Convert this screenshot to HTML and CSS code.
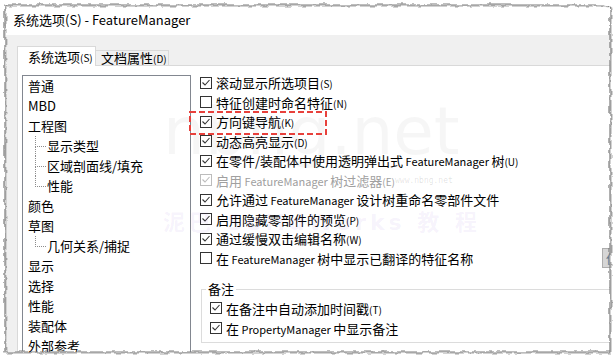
FILE: index.html
```html
<!DOCTYPE html>
<html lang="zh-CN">
<head>
  <meta charset="UTF-8">
  <meta name="viewport" content="width=device-width, initial-scale=1.0">
  <title>系统选项(S) - FeatureManager</title>
  <link rel="stylesheet" href="styles.css">
</head>
<body>
  <div class="dialog">
    <div class="titlebar">系统选项<span class="en">(S) - FeatureManager</span></div>

    <div class="client">
      <div class="tabs">
        <div class="tab active">系统选项<span class="key">(S)</span></div>
        <div class="tab">文档属性<span class="key">(D)</span></div>
      </div>

      <div class="page">
        <ul class="tree">
          <li>普通</li>
          <li><span class="en">MBD</span></li>
          <li>工程图</li>
          <li class="child">显示类型</li>
          <li class="child">区域剖面线/填充</li>
          <li class="child last">性能</li>
          <li>颜色</li>
          <li>草图</li>
          <li class="child last">几何关系/捕捉</li>
          <li>显示</li>
          <li>选择</li>
          <li>性能</li>
          <li>装配体</li>
          <li>外部参考</li>
        </ul>

        <div class="options">
          <div class="opt">
            <svg class="box" viewBox="0 0 12 12"><rect x=".5" y=".5" width="11" height="11"/><path d="M2.5 5.5L5 8l4.5-5"/></svg>
            <span>滚动显示所选项目<span class="key">(S)</span></span>
          </div>
          <div class="opt">
            <svg class="box" viewBox="0 0 12 12"><rect x=".5" y=".5" width="11" height="11"/></svg>
            <span>特征创建时命名特征<span class="key">(N)</span></span>
          </div>
          <div class="opt">
            <svg class="box" viewBox="0 0 12 12"><rect x=".5" y=".5" width="11" height="11"/><path d="M2.5 5.5L5 8l4.5-5"/></svg>
            <span>方向键导航<span class="key">(K)</span></span>
          </div>
          <div class="opt">
            <svg class="box" viewBox="0 0 12 12"><rect x=".5" y=".5" width="11" height="11"/><path d="M2.5 5.5L5 8l4.5-5"/></svg>
            <span>动态高亮显示<span class="key">(D)</span></span>
          </div>
          <div class="opt">
            <svg class="box" viewBox="0 0 12 12"><rect x=".5" y=".5" width="11" height="11"/><path d="M2.5 5.5L5 8l4.5-5"/></svg>
            <span>在零件/装配体中使用透明弹出式<span class="en"> FeatureManager </span>树<span class="key">(U)</span></span>
          </div>
          <div class="opt disabled">
            <svg class="box" viewBox="0 0 12 12"><rect x=".5" y=".5" width="11" height="11"/><path d="M2.5 5.5L5 8l4.5-5"/></svg>
            <span>启用<span class="en"> FeatureManager </span>树过滤器<span class="key">(E)</span></span>
          </div>
          <div class="opt">
            <svg class="box" viewBox="0 0 12 12"><rect x=".5" y=".5" width="11" height="11"/><path d="M2.5 5.5L5 8l4.5-5"/></svg>
            <span>允许通过<span class="en"> FeatureManager </span>设计树重命名零部件文件</span>
          </div>
          <div class="opt">
            <svg class="box" viewBox="0 0 12 12"><rect x=".5" y=".5" width="11" height="11"/><path d="M2.5 5.5L5 8l4.5-5"/></svg>
            <span>启用隐藏零部件的预览<span class="key">(P)</span></span>
          </div>
          <div class="opt">
            <svg class="box" viewBox="0 0 12 12"><rect x=".5" y=".5" width="11" height="11"/><path d="M2.5 5.5L5 8l4.5-5"/></svg>
            <span>通过缓慢双击编辑名称<span class="key">(W)</span></span>
          </div>
          <div class="opt">
            <svg class="box" viewBox="0 0 12 12"><rect x=".5" y=".5" width="11" height="11"/></svg>
            <span>在<span class="en"> FeatureManager </span>树中显示已翻译的特征名称</span>
            <button class="more">使</button>
          </div>

          <fieldset class="group">
            <legend>备注</legend>
            <div class="opt">
              <svg class="box" viewBox="0 0 12 12"><rect x=".5" y=".5" width="11" height="11"/><path d="M2.5 5.5L5 8l4.5-5"/></svg>
              <span>在备注中自动添加时间戳<span class="key">(T)</span></span>
            </div>
            <div class="opt">
              <svg class="box" viewBox="0 0 12 12"><rect x=".5" y=".5" width="11" height="11"/><path d="M2.5 5.5L5 8l4.5-5"/></svg>
              <span>在<span class="en"> PropertyManager </span>中显示备注</span>
            </div>
          </fieldset>
        </div>
      </div>
    </div>

    <!-- faint watermark stamped over the capture -->
    <div class="wm wm-big">nbng.net</div>
    <div class="wm wm-small">www.nbng.net</div>
    <div class="wm wm-cn">泥巴 SolidWorks 教 程</div>

    <!-- red dashed callout -->
    <svg class="callout" width="138" height="24" viewBox="0 0 138 24">
      <rect x="1" y="1" width="136" height="22"/>
    </svg>

    <!-- torn paper edge -->
    <svg class="edge" width="614" height="357" viewBox="0 0 614 357">
      <defs>
        <filter id="rough" x="-10%" y="-10%" width="120%" height="120%">
          <feTurbulence type="fractalNoise" baseFrequency="0.13" numOctaves="2" seed="7"/>
          <feDisplacementMap in="SourceGraphic" scale="5" xChannelSelector="R" yChannelSelector="G"/>
        </filter>
      </defs>
      <g filter="url(#rough)">
        <path class="outside" fill-rule="evenodd" d="M-30,-30H644V387H-30Z M5,5H604Q610,5 610,11V352H5Z"/>
        <path class="shade" d="M6,6H605Q611,6 611,12V353H6Z"/>
        <path class="line" d="M5,5H604Q610,5 610,11V352H5Z"/>
      </g>
    </svg>
  </div>
</body>
</html>
```

FILE: styles.css
```css
body{
  margin: 0;
  background: #fff;
}
.dialog{
  position: relative;
  width: 614px;
  height: 357px;
  overflow: hidden;
  background: #f0f0f0;
  color: #000;
  font-family: "Noto Sans CJK SC", sans-serif;
  font-size: 13px;
}
.en{
  font-size: 11px;
}
.key{
  font-size: 10px;
}
.titlebar{
  height: 31px;
  padding: 4px 0 0 13px;
  line-height: 31px;
  background: #fff;
}
.titlebar .en{
  font-size: 13px;
}

.client{
  padding: 11px 0 0 17px;
}
.tabs{
  position: relative;
  z-index: 1;
  display: flex;
  align-items: flex-end;
  height: 20px;
  margin-bottom: -1px;
}
.tab{
  box-sizing: border-box;
  width: 73px;
  height: 15px;
  margin-bottom: 1px;
  padding-left: 5px;
  line-height: 14px;
  border: 1px solid #d9d9d9;
  border-left: 0;
  border-bottom: 0;
  background: #f0f0f0;
  white-space: nowrap;
}
.tab.active{
  width: 79px;
  height: 20px;
  margin-bottom: 0;
  padding-left: 10px;
  line-height: 19px;
  border-left: 1px solid #d9d9d9;
  background: #fff;
}

.page{
  display: flex;
  gap: 9px;
  height: 320px;
  padding: 7px 0 0 4px;
  background: #fff;
  border: 1px solid #d9d9d9;
}

.tree{
  flex: none;
  box-sizing: border-box;
  width: 169px;
  height: 300px;
  margin: 2px 0 0;
  padding: 0 0 0 5px;
  list-style: none;
  border: 1px solid #828790;
}
.tree li{
  position: relative;
  height: 20px;
  line-height: 19px;
  white-space: nowrap;
}
.tree .en{
  font-size: 13px;
}
.tree li.child{
  padding-left: 19px;
}
.tree li.child::before{
  content: "";
  position: absolute;
  left: 7px;
  top: 0;
  width: 10px;
  height: 10px;
  border-left: 1px dotted #8c8c8c;
  border-bottom: 1px dotted #8c8c8c;
}
.tree li.child:not(.last)::after{
  content: "";
  position: absolute;
  left: 7px;
  top: 10px;
  height: 10px;
  border-left: 1px dotted #8c8c8c;
}

.options{
  flex: none;
  width: 440px;
}
.opt{
  display: flex;
  align-items: center;
  gap: 4px;
  height: 19.5px;
  white-space: nowrap;
}
.box{
  flex: none;
  width: 12px;
  height: 12px;
}
.box rect{
  fill: #fff;
  stroke: #333;
}
.box path{
  fill: none;
  stroke: #333;
  stroke-width: 1.1;
}
.disabled{
  color: #a0a0a0;
}
.disabled .box rect,
.disabled .box path{
  stroke: #bcbcbc;
}
.more{
  box-sizing: border-box;
  width: 38px;
  height: 20px;
  margin-left: auto;
  padding: 0 0 0 3px;
  border: 1px solid #adadad;
  background: #d6d6d6;
  color: #5a7a90;
  font: 12px "Noto Sans CJK SC", sans-serif;
  text-align: left;
}

.group{
  min-width: 0;
  margin: 12px 0 0 1px;
  padding: 0 0 4px 8px;
  border: 1px solid #dcdcdc;
}
.group legend{
  margin-left: -4px;
  padding: 0 2px;
  line-height: 18px;
}
.group .opt{
  height: 20px;
}

.wm{
  position: absolute;
  pointer-events: none;
  white-space: nowrap;
}
.wm-big{
  left: 163px;
  top: 99px;
  font: 66px/66px "DejaVu Sans", sans-serif;
  color: rgba(0, 0, 0, 0.035);
}
.wm-small{
  left: 395px;
  top: 176px;
  font: 8px/10px "DejaVu Sans Mono", monospace;
  color: rgba(0, 0, 0, 0.12);
}
.wm-cn{
  left: 163px;
  top: 210px;
  font: bold 22px/26px "DejaVu Sans", "Noto Sans CJK SC", sans-serif;
  letter-spacing: 4px;
  color: rgba(140, 80, 210, 0.08);
}

.callout{
  position: absolute;
  left: 189px;
  top: 111px;
}
.callout rect{
  fill: none;
  stroke: #e8413c;
  stroke-width: 2;
  stroke-dasharray: 6 3;
}

.edge{
  position: absolute;
  left: 0;
  top: 0;
  pointer-events: none;
}
.edge .outside{
  fill: #fff;
}
.edge .shade{
  fill: none;
  stroke: #d2d2d2;
  stroke-width: 2;
}
.edge .line{
  fill: none;
  stroke: #7d7d7d;
  stroke-width: 1.2;
}
```
